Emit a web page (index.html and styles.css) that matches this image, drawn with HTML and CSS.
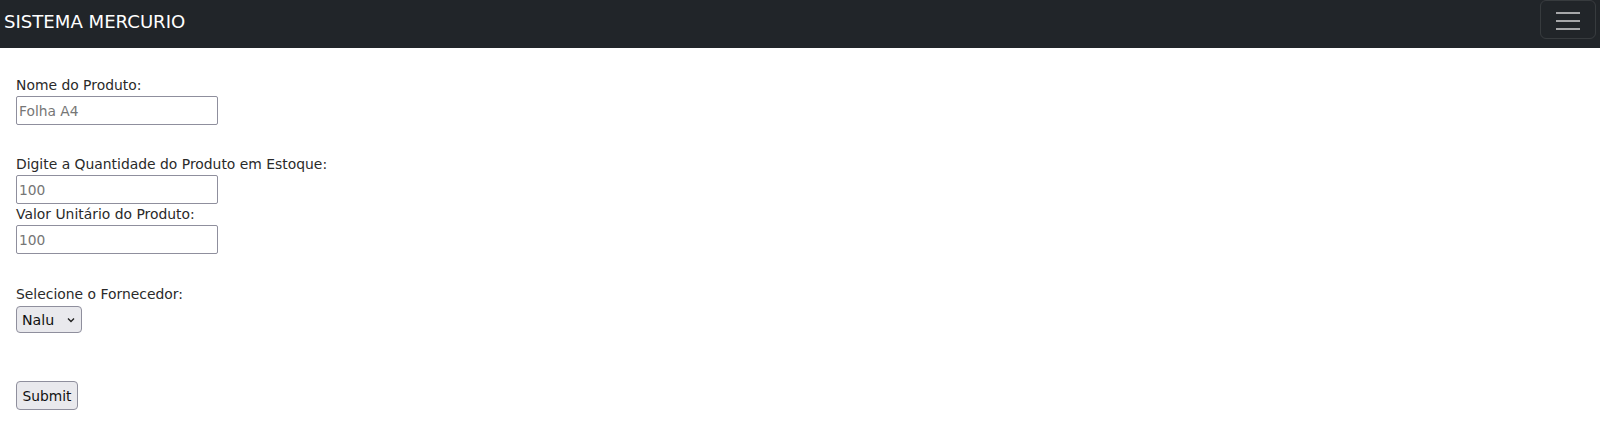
FILE: index.html
```html
<!DOCTYPE html>
<html lang="pt-BR">
<head>
<meta charset="utf-8">
<title>Sistema Mercurio</title>
<link rel="stylesheet" href="styles.css">
</head>
<body>
<nav class="navbar">
  <a class="brand" href="#">SISTEMA MERCURIO</a>
  <button class="toggler" type="button" aria-label="Menu">
    <span class="bar"></span><span class="bar"></span><span class="bar"></span>
  </button>
</nav>
<form class="form">
  <label class="lbl lbl-first" for="nome">Nome do Produto:</label>
  <input class="field" id="nome" type="text" placeholder="Folha A4">
  <label class="lbl lbl-gap" for="qtd">Digite a Quantidade do Produto em Estoque:</label>
  <input class="field" id="qtd" type="text" placeholder="100">
  <label class="lbl lbl-tight" for="valor">Valor Unitário do Produto:</label>
  <input class="field" id="valor" type="text" placeholder="100">
  <label class="lbl lbl-gap2" for="forn">Selecione o Fornecedor:</label>
  <span class="select-wrap">
    <select class="select" id="forn"><option>Nalu</option></select>
    <svg class="chev" width="8" height="6" viewBox="0 0 8 6"><path d="M1 1.5 L4 4.5 L7 1.5" fill="none" stroke="#222" stroke-width="1.4"/></svg>
  </span>
  <button class="submit" type="submit">Submit</button>
</form>
</body>
</html>
```
FILE: styles.css
```css
* { box-sizing: border-box; }
html, body { margin: 0; padding: 0; background: #fff; }
body {
  font-family: "DejaVu Sans", "Open Sans", sans-serif;
  color: #212529;
}
.navbar {
  height: 48px;
  background: #212529;
  display: flex;
  align-items: flex-start;
  justify-content: space-between;
}
.brand {
  color: #fff;
  text-decoration: none;
  font-size: 18.1px;
  line-height: 24px;
  margin: 10px 0 0 4px;
}
.toggler {
  width: 56px;
  height: 39px;
  margin: 0 4px 0 0;
  background: transparent;
  border: 1px solid rgba(255,255,255,0.1);
  border-radius: 6px;
  display: flex;
  flex-direction: column;
  align-items: center;
  justify-content: flex-start;
  gap: 6px;
  padding: 11px 0 0 0;
}
.bar {
  display: block;
  width: 24px;
  height: 2px;
  background: rgba(255,255,255,0.6);
}
.form {
  display: flex;
  flex-direction: column;
  align-items: flex-start;
  padding: 0 0 0 16px;
}
.lbl {
  font-size: 13.9px;
  line-height: 18px;
  height: 18px;
  color: #2a2a2a;
}
.lbl-first { margin-top: 28px; }
.lbl-gap { margin-top: 30px; }
.lbl-tight { margin-top: 1px; }
.lbl-gap2 { margin-top: 31px; }
.field {
  margin-top: 2px;
  width: 202px;
  height: 29px;
  border: 1px solid #8f8f9d;
  border-radius: 2px;
  padding: 0 2px;
  font-family: "DejaVu Sans", sans-serif;
  font-size: 13.8px;
  color: #333;
  background: #fff;
}
.field::placeholder { color: #767676; opacity: 1; }
.select-wrap {
  position: relative;
  margin-top: 3px;
  display: block;
  height: 27px;
}
.select {
  appearance: none;
  -webkit-appearance: none;
  width: 66px;
  height: 27px;
  border: 1px solid #8f8f9d;
  border-radius: 4px;
  background: #e9e9ed;
  font-family: "DejaVu Sans", sans-serif;
  font-size: 14.2px;
  color: #111;
  padding: 0 0 0 5px;
}
.chev {
  position: absolute;
  left: 51px;
  top: 11px;
  pointer-events: none;
}
.submit {
  margin-top: 48px;
  width: 62px;
  height: 29px;
  border: 1px solid #8f8f9d;
  border-radius: 4px;
  background: #e9e9ed;
  font-family: "DejaVu Sans", sans-serif;
  font-size: 13.8px;
  color: #111;
  padding: 0;
}
```
